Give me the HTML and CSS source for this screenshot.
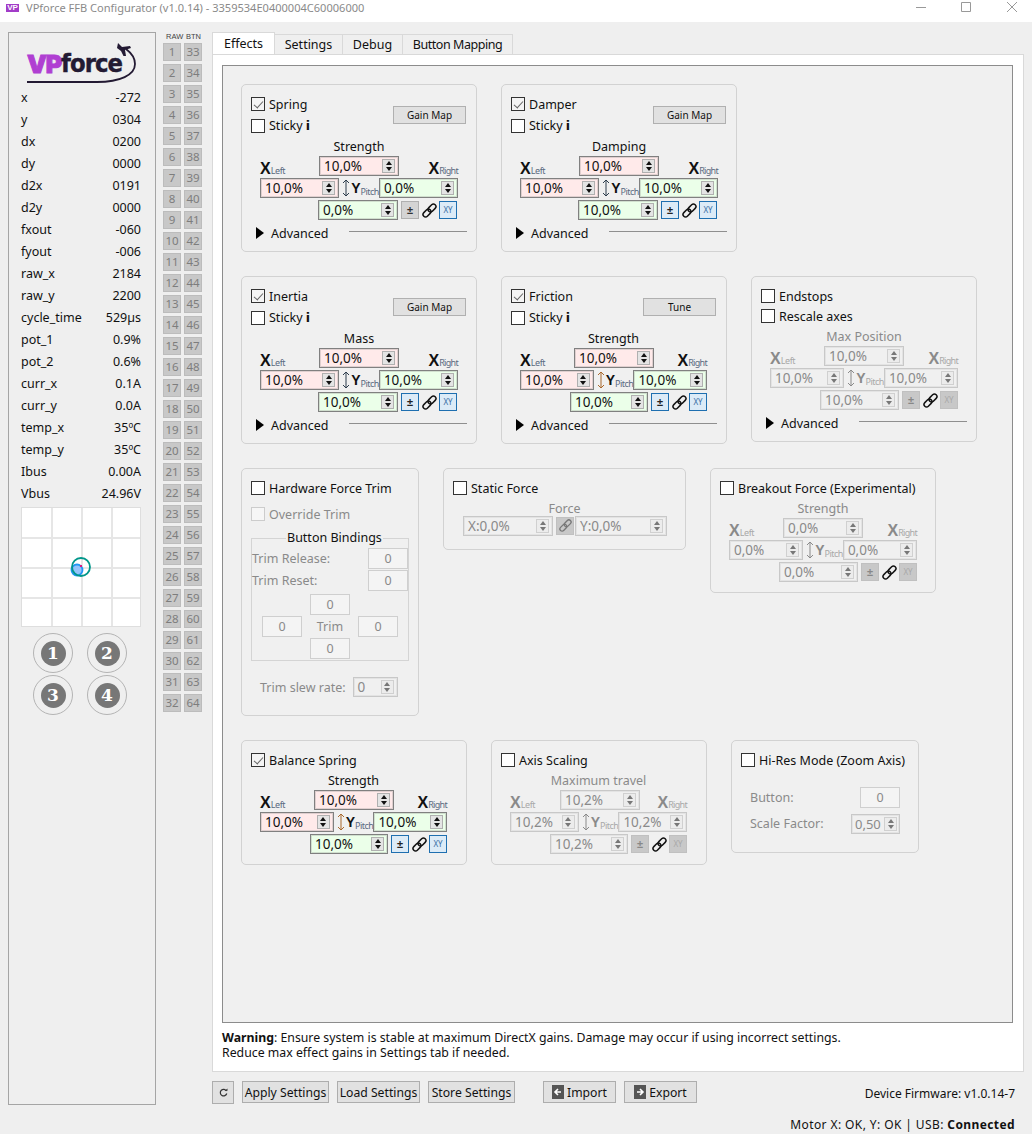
FILE: index.html
```html
<!DOCTYPE html>
<html lang="en">
<head>
<meta charset="utf-8">
<title>VPforce FFB Configurator</title>
<link rel="stylesheet" href="styles.css">
</head>
<body>
<header class="titlebar">
  <span class="app-icon">VP</span>
  <span class="app-title">VPforce FFB Configurator (v1.0.14) - 3359534E0400004C60006000</span>
  <span class="win-controls">
    <svg width="116" height="12" viewBox="0 0 116 12"><path d="M0 6.500H10M45.500 1.500H54.500V10.500H45.500ZM91 1L101 11M101 1L91 11" fill="none" stroke="#999" stroke-width="1"/></svg>
  </span>
</header>

<div class="content">
  <aside class="telemetry">
    <div class="logo">
      <span class="logo-vp">VP</span><span class="logo-force">force</span>
      <svg class="logo-arc" width="110" height="42" viewBox="0 0 110 42"><path d="M0 39H70C93 39 108 32 108 21C108 14 103 9 99 6" fill="none" stroke="#231a33" stroke-width="1.800"/><path d="M91 0L95 4L103 3L104 5L98 7L99 13L96.500 13L94 8L90 5Z" fill="#231a33"/></svg>
    </div>
    <dl class="readings">
      <div class="reading"><dt>x</dt><dd>-272</dd></div>
      <div class="reading"><dt>y</dt><dd>0304</dd></div>
      <div class="reading"><dt>dx</dt><dd>0200</dd></div>
      <div class="reading"><dt>dy</dt><dd>0000</dd></div>
      <div class="reading"><dt>d2x</dt><dd>0191</dd></div>
      <div class="reading"><dt>d2y</dt><dd>0000</dd></div>
      <div class="reading"><dt>fxout</dt><dd>-060</dd></div>
      <div class="reading"><dt>fyout</dt><dd>-006</dd></div>
      <div class="reading"><dt>raw_x</dt><dd>2184</dd></div>
      <div class="reading"><dt>raw_y</dt><dd>2200</dd></div>
      <div class="reading"><dt>cycle_time</dt><dd>529µs</dd></div>
      <div class="reading"><dt>pot_1</dt><dd>0.9%</dd></div>
      <div class="reading"><dt>pot_2</dt><dd>0.6%</dd></div>
      <div class="reading"><dt>curr_x</dt><dd>0.1A</dd></div>
      <div class="reading"><dt>curr_y</dt><dd>0.0A</dd></div>
      <div class="reading"><dt>temp_x</dt><dd>35ºC</dd></div>
      <div class="reading"><dt>temp_y</dt><dd>35ºC</dd></div>
      <div class="reading"><dt>Ibus</dt><dd>0.00A</dd></div>
      <div class="reading"><dt>Vbus</dt><dd>24.96V</dd></div>
    </dl>
    <div class="plot">
      <svg class="plot-marks" width="120" height="120" viewBox="0 0 120 120">
        <circle cx="56" cy="63" r="5.500" fill="#93c3fb" stroke="#2196f3" stroke-width="1.800"/>
        <circle cx="60" cy="60" r="9" fill="none" stroke="#00968a" stroke-width="1.800"/>
        <rect x="59" y="58" width="2" height="2" fill="#d81b80"/>
      </svg>
    </div>
    <div class="hat-grid">
      <div class="hat"><span class="hat-num">1</span></div>
      <div class="hat"><span class="hat-num">2</span></div>
      <div class="hat"><span class="hat-num">3</span></div>
      <div class="hat"><span class="hat-num">4</span></div>
    </div>
  </aside>

  <section class="btn-col">
    <div class="btn-head"><span>RAW</span><span>BTN</span></div>
    <div class="btn-grid">
      <span>1</span><span>33</span><span>2</span><span>34</span><span>3</span><span>35</span><span>4</span><span>36</span>
      <span>5</span><span>37</span><span>6</span><span>38</span><span>7</span><span>39</span><span>8</span><span>40</span>
      <span>9</span><span>41</span><span>10</span><span>42</span><span>11</span><span>43</span><span>12</span><span>44</span>
      <span>13</span><span>45</span><span>14</span><span>46</span><span>15</span><span>47</span><span>16</span><span>48</span>
      <span>17</span><span>49</span><span>18</span><span>50</span><span>19</span><span>51</span><span>20</span><span>52</span>
      <span>21</span><span>53</span><span>22</span><span>54</span><span>23</span><span>55</span><span>24</span><span>56</span>
      <span>25</span><span>57</span><span>26</span><span>58</span><span>27</span><span>59</span><span>28</span><span>60</span>
      <span>29</span><span>61</span><span>30</span><span>62</span><span>31</span><span>63</span><span>32</span><span>64</span>
    </div>
  </section>

  <main class="right">
    <nav class="tabs">
      <span class="tab tab-active">Effects</span>
      <span class="tab tab-settings">Settings</span>
      <span class="tab tab-debug">Debug</span>
      <span class="tab tab-map">Button Mapping</span>
    </nav>
    <div class="pane">
      <div class="frame">

        <div class="row">
          <section class="group w236">
            <div class="head">
              <div class="checks">
                <label class="chk"><span class="box on"></span>Spring</label>
                <label class="chk chk-sticky"><span class="box"></span>Sticky <b class="info">i</b></label>
              </div>
              <span class="mapbtn">Gain Map</span>
            </div>
            <div class="axis a-wide">
              <div class="cap">Strength</div>
              <div class="a-top"><span class="xl">X<small>Left</small></span><span class="spin pink"><span>10,0%</span><span class="arrows"><i></i><i></i></span></span><span class="xr">X<small>Right</small></span></div>
              <div class="a-mid"><span class="spin side-l pink"><span>10,0%</span><span class="arrows"><i></i><i></i></span></span><span class="ylab"><svg class="yarrow" width="8" height="18" viewBox="0 0 8 18"><path d="M4 1V17M1 4L4 1L7 4M1 14L4 17L7 14" fill="none" stroke="currentColor"/></svg>Y<small>Pitch</small></span><span class="spin side-r green"><span>0,0%</span><span class="arrows"><i></i><i></i></span></span></div>
              <div class="a-bot"><span class="spin green"><span>0,0%</span><span class="arrows"><i></i><i></i></span></span><span class="sq">±</span><svg class="link" width="15" height="15" viewBox="0 0 15 15"><g fill="none" stroke="#111" stroke-width="1.500"><rect x=".5" y="7.500" width="9" height="5" rx="2.500" transform="rotate(-45 5 10)"/><rect x="5.500" y="2.500" width="9" height="5" rx="2.500" transform="rotate(-45 10 5)"/></g></svg><span class="sq xy">XY</span></div>
            </div>
            <div class="adv"><span class="tri"></span><span>Advanced</span><span class="rule"></span></div>
          </section>

          <section class="group w236">
            <div class="head">
              <div class="checks">
                <label class="chk"><span class="box on"></span>Damper</label>
                <label class="chk chk-sticky"><span class="box"></span>Sticky <b class="info">i</b></label>
              </div>
              <span class="mapbtn">Gain Map</span>
            </div>
            <div class="axis a-wide">
              <div class="cap">Damping</div>
              <div class="a-top"><span class="xl">X<small>Left</small></span><span class="spin pink"><span>10,0%</span><span class="arrows"><i></i><i></i></span></span><span class="xr">X<small>Right</small></span></div>
              <div class="a-mid"><span class="spin side-l pink"><span>10,0%</span><span class="arrows"><i></i><i></i></span></span><span class="ylab"><svg class="yarrow" width="8" height="18" viewBox="0 0 8 18"><path d="M4 1V17M1 4L4 1L7 4M1 14L4 17L7 14" fill="none" stroke="currentColor"/></svg>Y<small>Pitch</small></span><span class="spin side-r green"><span>10,0%</span><span class="arrows"><i></i><i></i></span></span></div>
              <div class="a-bot"><span class="spin green"><span>10,0%</span><span class="arrows"><i></i><i></i></span></span><span class="sq pm-on">±</span><svg class="link" width="15" height="15" viewBox="0 0 15 15"><g fill="none" stroke="#111" stroke-width="1.500"><rect x=".5" y="7.500" width="9" height="5" rx="2.500" transform="rotate(-45 5 10)"/><rect x="5.500" y="2.500" width="9" height="5" rx="2.500" transform="rotate(-45 10 5)"/></g></svg><span class="sq xy">XY</span></div>
            </div>
            <div class="adv"><span class="tri"></span><span>Advanced</span><span class="rule"></span></div>
          </section>
        </div>

        <div class="row">
          <section class="group w236">
            <div class="head">
              <div class="checks">
                <label class="chk"><span class="box on"></span>Inertia</label>
                <label class="chk chk-sticky"><span class="box"></span>Sticky <b class="info">i</b></label>
              </div>
              <span class="mapbtn">Gain Map</span>
            </div>
            <div class="axis a-wide">
              <div class="cap">Mass</div>
              <div class="a-top"><span class="xl">X<small>Left</small></span><span class="spin pink"><span>10,0%</span><span class="arrows"><i></i><i></i></span></span><span class="xr">X<small>Right</small></span></div>
              <div class="a-mid"><span class="spin side-l pink"><span>10,0%</span><span class="arrows"><i></i><i></i></span></span><span class="ylab"><svg class="yarrow" width="8" height="18" viewBox="0 0 8 18"><path d="M4 1V17M1 4L4 1L7 4M1 14L4 17L7 14" fill="none" stroke="currentColor"/></svg>Y<small>Pitch</small></span><span class="spin side-r green"><span>10,0%</span><span class="arrows"><i></i><i></i></span></span></div>
              <div class="a-bot"><span class="spin green"><span>10,0%</span><span class="arrows"><i></i><i></i></span></span><span class="sq pm-on">±</span><svg class="link" width="15" height="15" viewBox="0 0 15 15"><g fill="none" stroke="#111" stroke-width="1.500"><rect x=".5" y="7.500" width="9" height="5" rx="2.500" transform="rotate(-45 5 10)"/><rect x="5.500" y="2.500" width="9" height="5" rx="2.500" transform="rotate(-45 10 5)"/></g></svg><span class="sq xy">XY</span></div>
            </div>
            <div class="adv"><span class="tri"></span><span>Advanced</span><span class="rule"></span></div>
          </section>

          <section class="group w226">
            <div class="head">
              <div class="checks">
                <label class="chk"><span class="box on"></span>Friction</label>
                <label class="chk chk-sticky"><span class="box"></span>Sticky <b class="info">i</b></label>
              </div>
              <span class="mapbtn">Tune</span>
            </div>
            <div class="axis a-friction warm">
              <div class="cap">Strength</div>
              <div class="a-top"><span class="xl">X<small>Left</small></span><span class="spin pink"><span>10,0%</span><span class="arrows"><i></i><i></i></span></span><span class="xr">X<small>Right</small></span></div>
              <div class="a-mid"><span class="spin side-l pink"><span>10,0%</span><span class="arrows"><i></i><i></i></span></span><span class="ylab"><svg class="yarrow" width="8" height="18" viewBox="0 0 8 18"><path d="M4 1V17M1 4L4 1L7 4M1 14L4 17L7 14" fill="none" stroke="currentColor"/></svg>Y<small>Pitch</small></span><span class="spin side-r green"><span>10,0%</span><span class="arrows"><i></i><i></i></span></span></div>
              <div class="a-bot"><span class="spin green"><span>10,0%</span><span class="arrows"><i></i><i></i></span></span><span class="sq pm-on">±</span><svg class="link" width="15" height="15" viewBox="0 0 15 15"><g fill="none" stroke="#111" stroke-width="1.500"><rect x=".5" y="7.500" width="9" height="5" rx="2.500" transform="rotate(-45 5 10)"/><rect x="5.500" y="2.500" width="9" height="5" rx="2.500" transform="rotate(-45 10 5)"/></g></svg><span class="sq xy">XY</span></div>
            </div>
            <div class="adv"><span class="tri"></span><span>Advanced</span><span class="rule"></span></div>
          </section>

          <section class="group w226">
            <div class="checks-tight">
              <label class="chk"><span class="box"></span>Endstops</label>
              <label class="chk"><span class="box"></span>Rescale axes</label>
            </div>
            <div class="axis a-std off">
              <div class="cap">Max Position</div>
              <div class="a-top"><span class="xl">X<small>Left</small></span><span class="spin"><span>10,0%</span><span class="arrows"><i></i><i></i></span></span><span class="xr">X<small>Right</small></span></div>
              <div class="a-mid"><span class="spin side-l"><span>10,0%</span><span class="arrows"><i></i><i></i></span></span><span class="ylab"><svg class="yarrow" width="8" height="18" viewBox="0 0 8 18"><path d="M4 1V17M1 4L4 1L7 4M1 14L4 17L7 14" fill="none" stroke="currentColor"/></svg>Y<small>Pitch</small></span><span class="spin side-r"><span>10,0%</span><span class="arrows"><i></i><i></i></span></span></div>
              <div class="a-bot"><span class="spin"><span>10,0%</span><span class="arrows"><i></i><i></i></span></span><span class="sq">±</span><svg class="link" width="15" height="15" viewBox="0 0 15 15"><g fill="none" stroke="#111" stroke-width="1.500"><rect x=".5" y="7.500" width="9" height="5" rx="2.500" transform="rotate(-45 5 10)"/><rect x="5.500" y="2.500" width="9" height="5" rx="2.500" transform="rotate(-45 10 5)"/></g></svg><span class="sq xy">XY</span></div>
            </div>
            <div class="adv"><span class="tri"></span><span>Advanced</span><span class="rule"></span></div>
          </section>
        </div>

        <div class="row">
          <section class="group w178 trim">
            <label class="chk"><span class="box"></span>Hardware Force Trim</label>
            <label class="chk chk-off override"><span class="box"></span>Override Trim</label>
            <fieldset class="bindings">
              <legend>Button Bindings</legend>
              <div class="bind-row"><span>Trim Release:</span><span class="field">0</span></div>
              <div class="bind-row"><span>Trim Reset:</span><span class="field">0</span></div>
              <div class="cross">
                <span class="field c-up">0</span>
                <span class="field c-left">0</span>
                <span class="c-label">Trim</span>
                <span class="field c-right">0</span>
                <span class="field c-down">0</span>
              </div>
            </fieldset>
            <div class="slew"><span>Trim slew rate:</span><span class="spin spin-small off-spin"><span>0</span><span class="arrows"><i></i><i></i></span></span></div>
          </section>

          <section class="group w243 static">
            <label class="chk"><span class="box"></span>Static Force</label>
            <div class="cap cap-off">Force</div>
            <div class="static-row off">
              <span class="spin spin-x"><span>X:0,0%</span><span class="arrows"><i></i><i></i></span></span>
              <span class="sq linkbox"><svg width="13" height="13" viewBox="0 0 15 15"><g fill="none" stroke="#777" stroke-width="1.500"><rect x=".5" y="7.500" width="9" height="5" rx="2.500" transform="rotate(-45 5 10)"/><rect x="5.500" y="2.500" width="9" height="5" rx="2.500" transform="rotate(-45 10 5)"/></g></svg></span>
              <span class="spin spin-y"><span>Y:0,0%</span><span class="arrows"><i></i><i></i></span></span>
            </div>
          </section>

          <section class="group w226 plain">
            <label class="chk"><span class="box"></span>Breakout Force (Experimental)</label>
            <div class="axis a-std off">
              <div class="cap">Strength</div>
              <div class="a-top"><span class="xl">X<small>Left</small></span><span class="spin"><span>0,0%</span><span class="arrows"><i></i><i></i></span></span><span class="xr">X<small>Right</small></span></div>
              <div class="a-mid"><span class="spin side-l"><span>0,0%</span><span class="arrows"><i></i><i></i></span></span><span class="ylab"><svg class="yarrow" width="8" height="18" viewBox="0 0 8 18"><path d="M4 1V17M1 4L4 1L7 4M1 14L4 17L7 14" fill="none" stroke="currentColor"/></svg>Y<small>Pitch</small></span><span class="spin side-r"><span>0,0%</span><span class="arrows"><i></i><i></i></span></span></div>
              <div class="a-bot"><span class="spin"><span>0,0%</span><span class="arrows"><i></i><i></i></span></span><span class="sq">±</span><svg class="link" width="15" height="15" viewBox="0 0 15 15"><g fill="none" stroke="#111" stroke-width="1.500"><rect x=".5" y="7.500" width="9" height="5" rx="2.500" transform="rotate(-45 5 10)"/><rect x="5.500" y="2.500" width="9" height="5" rx="2.500" transform="rotate(-45 10 5)"/></g></svg><span class="sq xy">XY</span></div>
            </div>
          </section>
        </div>

        <div class="row">
          <section class="group w226 plain">
            <label class="chk"><span class="box on"></span>Balance Spring</label>
            <div class="axis a-balance warm">
              <div class="cap">Strength</div>
              <div class="a-top"><span class="xl">X<small>Left</small></span><span class="spin pink"><span>10,0%</span><span class="arrows"><i></i><i></i></span></span><span class="xr">X<small>Right</small></span></div>
              <div class="a-mid"><span class="spin side-l pink"><span>10,0%</span><span class="arrows"><i></i><i></i></span></span><span class="ylab"><svg class="yarrow" width="8" height="18" viewBox="0 0 8 18"><path d="M4 1V17M1 4L4 1L7 4M1 14L4 17L7 14" fill="none" stroke="currentColor"/></svg>Y<small>Pitch</small></span><span class="spin side-r green"><span>10,0%</span><span class="arrows"><i></i><i></i></span></span></div>
              <div class="a-bot"><span class="spin green"><span>10,0%</span><span class="arrows"><i></i><i></i></span></span><span class="sq pm-on">±</span><svg class="link" width="15" height="15" viewBox="0 0 15 15"><g fill="none" stroke="#111" stroke-width="1.500"><rect x=".5" y="7.500" width="9" height="5" rx="2.500" transform="rotate(-45 5 10)"/><rect x="5.500" y="2.500" width="9" height="5" rx="2.500" transform="rotate(-45 10 5)"/></g></svg><span class="sq xy">XY</span></div>
            </div>
          </section>

          <section class="group w216 plain">
            <label class="chk"><span class="box"></span>Axis Scaling</label>
            <div class="axis a-axis off">
              <div class="cap">Maximum travel</div>
              <div class="a-top"><span class="xl">X<small>Left</small></span><span class="spin"><span>10,2%</span><span class="arrows"><i></i><i></i></span></span><span class="xr">X<small>Right</small></span></div>
              <div class="a-mid"><span class="spin side-l"><span>10,2%</span><span class="arrows"><i></i><i></i></span></span><span class="ylab"><svg class="yarrow" width="8" height="18" viewBox="0 0 8 18"><path d="M4 1V17M1 4L4 1L7 4M1 14L4 17L7 14" fill="none" stroke="currentColor"/></svg>Y<small>Pitch</small></span><span class="spin side-r"><span>10,2%</span><span class="arrows"><i></i><i></i></span></span></div>
              <div class="a-bot"><span class="spin"><span>10,2%</span><span class="arrows"><i></i><i></i></span></span><span class="sq">±</span><svg class="link" width="15" height="15" viewBox="0 0 15 15"><g fill="none" stroke="#111" stroke-width="1.500"><rect x=".5" y="7.500" width="9" height="5" rx="2.500" transform="rotate(-45 5 10)"/><rect x="5.500" y="2.500" width="9" height="5" rx="2.500" transform="rotate(-45 10 5)"/></g></svg><span class="sq xy">XY</span></div>
            </div>
          </section>

          <section class="group w188 hires">
            <label class="chk"><span class="box"></span>Hi-Res Mode (Zoom Axis)</label>
            <div class="hi-row hi-first"><span>Button:</span><span class="field">0</span></div>
            <div class="hi-row"><span>Scale Factor:</span><span class="spin spin-scale off-spin"><span>0,50</span><span class="arrows"><i></i><i></i></span></span></div>
          </section>
        </div>
      </div>
      <p class="warning"><b>Warning</b>: Ensure system is stable at maximum DirectX gains. Damage may occur if using incorrect settings.<br>Reduce max effect gains in Settings tab if needed.</p>
    </div>

    <footer class="actions">
      <span class="btn btn-refresh"><svg width="9" height="9" viewBox="0 0 9 9"><path d="M7.500 3A3.300 3.300 0 1 0 7.800 5.500" fill="none" stroke="#333" stroke-width="1.200"/><path d="M5.800 2.800H8.500V.5Z" fill="#333"/></svg></span>
      <span class="btn b-apply">Apply Settings</span>
      <span class="btn b-load">Load Settings</span>
      <span class="btn b-store">Store Settings</span>
      <span class="btn b-io b-import"><svg width="12" height="14" viewBox="0 0 12 14"><path d="M0 0H12V14H0Z" fill="#555"/><path d="M9 7H4M6 4L3 7L6 10" fill="none" stroke="#fff" stroke-width="1.600"/></svg>Import</span>
      <span class="btn b-io"><svg width="12" height="14" viewBox="0 0 12 14"><path d="M0 0H12V14H0Z" fill="#555"/><path d="M3 7H8M6 4L9 7L6 10" fill="none" stroke="#fff" stroke-width="1.600"/></svg>Export</span>
      <span class="firmware">Device Firmware: v1.0.14-7</span>
    </footer>
  </main>
</div>
<div class="status">Motor X: OK, Y: OK | USB: <b>Connected</b></div>
</body>
</html>
```
FILE: styles.css
```css
* { box-sizing: border-box; }
html, body { margin: 0; padding: 0; }
body {
  width: 1032px;
  height: 1134px;
  overflow: hidden;
  background: #efefef;
  color: #111;
  font-family: "Noto Sans", "Liberation Sans", sans-serif;
  font-size: 12.5px;
}

/* title bar */
.titlebar {
  height: 22px;
  background: #fff;
  display: flex;
  align-items: center;
  padding-left: 6px;
}
.app-icon {
  width: 13px;
  height: 8px;
  margin-top: -6px;
  background: #a23cc8;
  color: #fff;
  font: bold 8px/8px "Liberation Sans", sans-serif;
  text-align: center;
}
.app-title { margin-left: 7px; margin-top: -8px; color: #8a8a8a; font-size: 11.050px; }
.win-controls { margin-left: auto; height: 12px; margin-top: -11px; }

.content { display: flex; padding: 10px 8px 0; height: 1094px; }

/* telemetry */
.telemetry {
  width: 148px;
  height: 1073px;
  border: 1px solid #a5a5a5;
  padding: 0 14px 0 12px;
}
.logo { position: relative; height: 54px; padding: 19px 0 0 6px; display: flex; line-height: 24px; white-space: nowrap; margin-right: -6px; }
.logo-vp { color: #b03fd2; font: 900 25px/24px Inter, "Liberation Sans", sans-serif; letter-spacing: -1px; -webkit-text-stroke: 1px #b03fd2; }
.logo-force { color: #231a33; font: 900 24px/24px "DejaVu Sans", sans-serif; letter-spacing: -1px; -webkit-text-stroke: .4px #231a33; transform-origin: left; transform: scaleX(.95); }
.logo-arc { position: absolute; left: 6px; top: 10px; }
.readings { margin: 0; }
.reading { display: flex; justify-content: space-between; height: 22px; line-height: 22px; }
.reading dt, .reading dd { margin: 0; }
.plot {
  position: relative;
  margin-top: 2px;
  width: 120px;
  height: 120px;
  background-color: #fff;
  background-image:
    linear-gradient(#e6e6e6, #e6e6e6),
    linear-gradient(#e6e6e6, #e6e6e6),
    linear-gradient(#e6e6e6, #e6e6e6),
    linear-gradient(#e6e6e6, #e6e6e6),
    linear-gradient(#e6e6e6, #e6e6e6),
    linear-gradient(#e6e6e6, #e6e6e6);
  background-size: 2px 100%, 2px 100%, 2px 100%, 100% 2px, 100% 2px, 100% 2px;
  background-position: 29px 0, 59px 0, 89px 0, 0 29px, 0 59px, 0 89px;
  background-repeat: no-repeat;
  border: 1px solid #dedede;
}
.plot-marks { position: absolute; left: -1px; top: -1px; }
.hat-grid { display: grid; grid-template-columns: 40px 40px; column-gap: 14px; row-gap: 2px; margin: 6px 0 0 12px; }
.hat { width: 40px; height: 40px; border: 1px solid #b4b4b4; border-radius: 50%; display: flex; align-items: center; justify-content: center; }
.hat-num {
  width: 25px; height: 25px; border-radius: 50%;
  background: #777; color: #fff;
  font: bold 17px/25px "DejaVu Serif", serif;
  text-align: center;
}

/* buttons column */
.btn-col { width: 39px; margin-left: 7px; }
.btn-head { display: flex; justify-content: space-between; height: 11px; font: 7.500px/9px "Liberation Sans", sans-serif; color: #444; padding: 0 1px 0 3px; }
.btn-grid { display: grid; grid-template-columns: 18px 18px; gap: 3px; }
.btn-grid span {
  height: 18px;
  background: #c8c8c8;
  border: 1px solid #bcbcbc;
  color: #7d7d7d;
  font-size: 11.500px;
  line-height: 16px;
  text-align: center;
}

/* right */
.right { width: 812px; margin-left: 10px; }
.tabs { display: flex; height: 22px; align-items: flex-end; }
.tab { height: 20px; border: 1px solid #d9d9d9; border-left: 0; border-bottom: 0; line-height: 20px; text-align: center; }
.tab-active { height: 22px; width: 63px; background: #fff; border-left: 1px solid #d9d9d9; line-height: 21px; }
.tab-settings { width: 68px; }
.tab-debug { width: 60px; }
.tab-map { width: 110px; letter-spacing: -.45px; }
.pane {
  height: 1018px;
  background: #fff;
  border: 1px solid #d9d9d9;
  padding: 10px 10px 0 9px;
  display: flex;
  flex-direction: column;
}
.frame {
  flex: 1;
  background: #f0f0f0;
  border: 1px solid #8c8c8c;
  padding: 18px 18px 0;
  display: flex;
  flex-direction: column;
  gap: 24px;
}
.row { display: flex; gap: 24px; align-items: flex-start; }
.warning { margin: 7px 0 11px; font-size: 12.300px; line-height: 15px; }
.warning b { font-weight: 700; }

/* groups */
.group {
  background: #f0f0f0;
  border: 1px solid #d2d2d2;
  border-radius: 5px;
  padding: 9px;
}
.w236 { width: 236px; }
.w226 { width: 226px; }
.w178 { width: 178px; }
.w243 { width: 243px; }
.w216 { width: 216px; }
.w188 { width: 188px; }
.plain { padding-bottom: 10px; }
.head { display: flex; justify-content: space-between; align-items: flex-start; height: 42px; }
.checks-tight .chk { height: 20px; }
.chk { display: flex; align-items: center; height: 20px; white-space: nowrap; }
.chk-sticky { height: 21px; margin-top: 1px; }
.box {
  position: relative;
  width: 14px; height: 14px;
  border: 1px solid #333;
  background: #fff;
  margin-right: 4px;
  flex: none;
}
.box.on { background: #f4f4f4; }
.box.on::after {
  content: "";
  position: absolute;
  left: 4px; top: 1px;
  width: 4px; height: 8px;
  border: solid #666;
  border-width: 0 1.500px 1.500px 0;
  transform: rotate(42deg);
}
.info { font-family: "DejaVu Sans", sans-serif; margin-left: 3px; font-weight: 700; }
.mapbtn {
  width: 73px; height: 18px;
  margin: 12px 1px 0 0;
  background: #e1e1e1;
  border: 1px solid #b0b0b0;
  font-size: 10px;
  line-height: 16px;
  text-align: center;
}

/* axis block */
.axis { display: flex; flex-direction: column; gap: 2px; margin-left: 9px; width: var(--w); }
.a-wide { --w: 198px; --top: 59px; --bot: 58px; --sl: 80px; --sr: 80px; }
.a-friction { --w: 187px; --top: 54px; --bot: 50px; --sl: 80px; --sr: 74px; }
.a-std { --w: 188px; --top: 54px; --bot: 50px; --sl: 75px; --sr: 75px; }
.a-balance { --w: 187px; --top: 54px; --bot: 50px; --sl: 74px; --sr: 74px; }
.a-axis { --w: 177px; --top: 50px; --bot: 40px; --sl: 75px; --sr: 68px; }
.cap { height: 18px; line-height: 22px; text-align: center; }
.a-top { display: grid; grid-template-columns: var(--top) 80px 1fr; height: 20px; }
.a-mid { display: flex; height: 20px; justify-content: space-between; }
.a-bot { display: flex; align-items: center; height: 20px; padding-left: var(--bot); }
.xl, .xr { font: bold 16px/25px "Liberation Sans", sans-serif; white-space: nowrap; }
.xr { text-align: right; }
.xl small, .xr small { font: 9px/9px "Noto Sans", sans-serif; color: #5a6a80; letter-spacing: -.4px; }
.xr small { letter-spacing: -.7px; }
.ylab { display: flex; align-items: center; flex: 1; padding-left: 3px; font: bold 14px/20px "Liberation Sans", sans-serif; white-space: nowrap; }
.ylab small { font: 9px/9px "Noto Sans", sans-serif; color: #5a6a80; letter-spacing: -.5px; margin-top: 6px; }
.yarrow { margin-right: 1px; color: #2c3c4c; }
.warm .yarrow { color: #a8682c; }
.side-l { width: var(--sl); }
.side-r { width: var(--sr); padding-left: 2px; }

.spin {
  display: flex;
  align-items: center;
  justify-content: space-between;
  width: 80px;
  height: 20px;
  border: 1px solid #808080;
  box-shadow: inset 0 0 0 1px rgba(128, 128, 128, .25);
  padding: 0 3px 0 4px;
  font-size: 13.500px;
  background: #f0f0f0;
  white-space: nowrap;
}
.pink { background: #ffeaea; }
.green { background: #ebffe9; }
.arrows { display: flex; flex-direction: column; width: 13px; height: 14px; border: 1px solid #b0b0b0; background: #e4e4e4; flex: none; }
.arrows i { flex: 1; position: relative; }
.arrows i::before {
  content: "";
  position: absolute;
  left: 2.500px;
  border-left: 3px solid transparent;
  border-right: 3px solid transparent;
}
.arrows i:first-child::before { top: 1px; border-bottom: 4px solid #111; }
.arrows i:last-child::before { bottom: 1px; border-top: 4px solid #111; }

.sq {
  width: 18px; height: 18px;
  margin-left: 3px;
  background: #d4d4d4;
  border: 1px solid #b0b0b0;
  font: bold 11px/16px "Liberation Sans", sans-serif;
  color: #333;
  text-align: center;
  flex: none;
}
.pm-on { background: #dcebf7; border-color: #1e6fb0; color: #222; }
.xy { margin-left: 2px; background: #dcebf7; border: 1px solid #1e6fb0; color: #3a6ea5; font: 8px/16px "Noto Sans", sans-serif; }
.link { margin-left: 3px; flex: none; }

/* disabled */
.off, .cap-off { color: #8a8a8a; }
.off .spin, .off-spin {
  border-color: #c8c8c8;
  box-shadow: inset 0 0 0 1px rgba(200, 200, 200, .3);
  background: #f0f0f0;
  color: #8a8a8a;
}
.off .arrows, .off-spin .arrows { border-color: #d0d0d0; background: #ececec; }
.off .arrows i::before, .off-spin .arrows i::before { border-top-color: #777; border-bottom-color: #777; }
.off .xl, .off .xr, .off .ylab { color: #8a8a8a; }
.off small { color: #a8a8a8; }
.off .yarrow { color: #8a8a8a; }
.off .sq { background: #c8c8c8; border-color: #c0c0c0; color: #888; }
.off .xy { color: #a8a8a8; }

/* advanced */
.adv { display: flex; align-items: center; height: 18px; margin: 4px 0 0 5px; }
.tri { width: 0; height: 0; border-left: 8px solid #000; border-top: 6px solid transparent; border-bottom: 6px solid transparent; margin-right: 7px; }
.rule { flex: 1; height: 1px; background: #8f8f8f; margin: -3px 0 0 20px; }

/* trim */
.chk-off { color: #8a8a8a; }
.chk-off .box { border-color: #ccc; background: #f6f6f6; }
.override { margin-top: 6px; }
.bindings {
  margin: 6px 0 0;
  padding: 1px 0 1px;
  width: 158px;
  height: 131px;
  border: 1px solid #d4d4d4;
  color: #8a8a8a;
}
.bindings legend { padding: 0 1px; margin-left: 34px; color: #111; line-height: 16px; }
.bind-row { display: flex; justify-content: space-between; align-items: center; height: 22px; }
.field {
  width: 40px; height: 21px;
  background: #f4f4f4;
  border: 1px solid #cfcfcf;
  color: #8a8a8a;
  line-height: 19px;
  text-align: center;
}
.cross {
  display: grid;
  grid-template-columns: 40px 40px 40px;
  grid-template-rows: 22px 22px 22px;
  column-gap: 8px;
  margin: 2px 0 0 10px;
  align-items: center;
  justify-items: center;
  width: 136px;
}
.c-up { grid-column: 2; grid-row: 1; }
.c-left { grid-column: 1; grid-row: 2; }
.c-label { grid-column: 2; grid-row: 2; }
.c-right { grid-column: 3; grid-row: 2; }
.c-down { grid-column: 2; grid-row: 3; }
.trim { padding-bottom: 18px; }
.slew { display: flex; align-items: center; margin: 16px 0 0 9px; color: #8a8a8a; }
.spin-small { width: 45px; margin-left: 7px; }

/* static */
.static { padding-bottom: 13px; }
.cap-off { text-align: center; }
.static-row { display: flex; gap: 3px; margin: 0 0 0 10px; height: 20px; }
.spin-x { width: 90px; }
.spin-y { width: 92px; margin-left: -2px; }
.static-row .linkbox { margin: 1px 0 0; background: #c8c8c8; }
.linkbox svg { margin-top: 1px; }

/* hi res */
.hires { padding-bottom: 18px; }
.hi-row { display: flex; align-items: center; justify-content: space-between; padding-left: 9px; margin-right: 9px; height: 21px; margin-top: 5px; color: #8a8a8a; }
.hi-first { margin-top: 17px; }
.spin-scale { width: 49px; padding: 0 2px 0 3px; font-size: 13px; }

/* footer */
.actions { display: flex; align-items: flex-start; gap: 8px; margin-top: 9px; height: 23px; }
.btn {
  display: flex; align-items: center; justify-content: center; gap: 3px;
  height: 22px;
  background: #e1e1e1;
  border: 1px solid #adadad;
  white-space: nowrap;
  font-size: 12.200px;
}
.btn-refresh { width: 22px; height: 23px; }
.b-apply, .b-store { width: 87px; }
.b-load { width: 83px; }
.b-io { width: 73px; }
.b-import { margin-left: 20px; }
.firmware { margin-left: auto; margin-right: 9px; line-height: 26px; font-size: 12px; }

.status { text-align: right; padding-right: 17px; line-height: 18px; font-size: 12px; letter-spacing: .4px; }
.status b { font-weight: 700; }
```
